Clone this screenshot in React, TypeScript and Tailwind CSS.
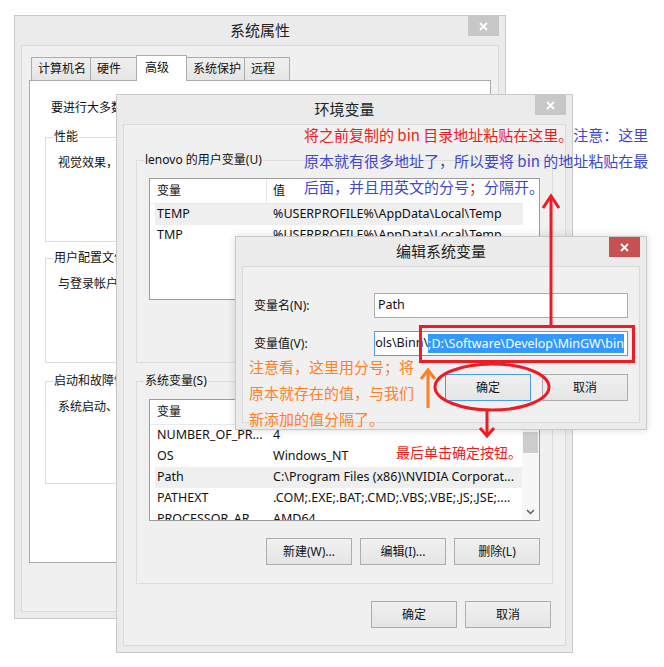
import React from 'react'

type Row = [string, string]

function CloseX({ active }: { active?: boolean }) {
  return (
    <div className={`absolute right-0 top-0 flex h-[20px] w-[31px] items-center justify-center ${active ? 'bg-[#c75050]' : 'bg-[#c7c7c7]'}`}>
      <svg width="9" height="9" viewBox="0 0 9 9">
        <path d="M1 1 L8 8 M8 1 L1 8" stroke="#fff" strokeWidth="1.8" />
      </svg>
    </div>
  )
}

function Win({ title, active, className, children }: { title: string; active?: boolean; className: string; children: React.ReactNode }) {
  return (
    <div className={`absolute flex flex-col border border-[#c9c9c9] bg-[#ebebeb] px-[6px] pb-[6px] ${className}`}>
      <div className="relative flex h-[29px] shrink-0 items-center justify-center text-[15px] text-[#222]">
        {title}
        <CloseX active={active} />
      </div>
      <div className="flex min-h-0 flex-1 flex-col border border-[#dadada] bg-[#f0f0f0]">{children}</div>
    </div>
  )
}

function Btn({ children, primary, className = '' }: { children: React.ReactNode; primary?: boolean; className?: string }) {
  return (
    <div
      className={`flex h-[27px] w-[86px] shrink-0 items-center justify-center border bg-linear-to-b from-[#f0f0f0] to-[#e5e5e5] text-[12px] text-[#111] ${
        primary ? 'border-[#4a9be8]' : 'border-[#acacac]'
      } ${className}`}
    >
      {children}
    </div>
  )
}

function Label({ children, bg }: { children: React.ReactNode; bg: string }) {
  return <div className={`-mt-[9px] ml-[7px] w-fit px-[1px] text-[12px] leading-[16px] text-[#111] ${bg}`}>{children}</div>
}

function ListView({ rows, hl, scroll }: { rows: Row[]; hl: number; scroll?: boolean }) {
  return (
    <div className="ml-[12px] flex h-[122px] w-[391px] overflow-hidden border border-[#9c9c9c] bg-white text-[12.5px] text-[#111]">
      <div className="min-w-0 flex-1 overflow-hidden">
        <div className="flex h-[25px] w-[373px] items-center border-b border-[#e5eaf1] text-[12px]">
          <div className="flex h-full w-[117px] items-center border-r border-[#e3e9f2] pl-[7px]">变量</div>
          <div className="pl-[6px]">值</div>
        </div>
        {rows.map((r, i) => (
          <div key={r[0]} className="w-[373px] pl-[5px]">
            <div className={`flex h-[21px] items-center whitespace-nowrap ${i === hl ? 'bg-[#efefef]' : ''}`}>
              <div className="w-[112px] shrink-0 overflow-hidden pl-[2px]">{r[0]}</div>
              <div className="min-w-0 flex-1 overflow-hidden pl-[6px]">{r[1]}</div>
            </div>
          </div>
        ))}
      </div>
      {scroll && (
        <div className="flex w-[17px] shrink-0 flex-col bg-[#f7f7f7]">
          <div className="h-[17px]" />
          <div className="mx-[1px] mt-[15px] h-[21px] bg-[#cdcdcd]" />
          <div className="mt-auto flex h-[17px] items-center justify-center">
            <svg width="9" height="6" viewBox="0 0 9 6">
              <path d="M1 1 L4.5 4.5 L8 1" stroke="#606060" strokeWidth="1.5" fill="none" />
            </svg>
          </div>
        </div>
      )}
    </div>
  )
}

const userRows: Row[] = [
  ['TEMP', '%USERPROFILE%\\AppData\\Local\\Temp'],
  ['TMP', '%USERPROFILE%\\AppData\\Local\\Temp'],
]

const sysRows: Row[] = [
  ['NUMBER_OF_PR...', '4'],
  ['OS', 'Windows_NT'],
  ['Path', 'C:\\Program Files (x86)\\NVIDIA Corporat...'],
  ['PATHEXT', '.COM;.EXE;.BAT;.CMD;.VBS;.VBE;.JS;.JSE;....'],
  ['PROCESSOR_AR...', 'AMD64'],
]

const tabs = [
  { t: '计算机名', w: 'w-[60px]' },
  { t: '硬件', w: 'w-[47px]' },
  { t: '高级', w: 'w-[51px]', sel: true },
  { t: '系统保护', w: 'w-[59px]' },
  { t: '远程', w: 'w-[46px]' },
]

const groups = [
  { t: '性能', d: '视觉效果，处理器计划，内存使用，以及虚拟内存', h: 'h-[105px]', mt: 'mt-[21px]' },
  { t: '用户配置文件', d: '与登录帐户相关的桌面设置', h: 'h-[105px]', mt: 'mt-[16px]' },
  { t: '启动和故障恢复', d: '系统启动、系统故障和调试信息', h: 'h-[103px]', mt: 'mt-[18px]' },
]

export default function App() {
  return (
    <div className="relative h-[667px] w-[664px] overflow-hidden bg-white font-['Noto_Sans','Noto_Sans_CJK_SC',sans-serif]">
      {/* 系统属性 */}
      <Win title="系统属性" className="left-[14px] top-[15px] h-[604px] w-[492px]">
        <div className="flex flex-1 flex-col px-[7px] pb-[48px] pt-[9px]">
          <div className="flex h-[25px] items-end pl-[2px]">
            {tabs.map((tab) =>
              tab.sel ? (
                <div key={tab.t} className={`relative z-10 -mb-px -ml-px flex h-[26px] items-center border border-b-0 border-[#acacac] bg-white pb-[2px] pl-[8px] text-[12px] text-[#111] ${tab.w}`}>
                  {tab.t}
                </div>
              ) : (
                <div key={tab.t} className={`-ml-px flex h-[23px] items-center border border-b-0 border-[#acacac] bg-linear-to-b from-[#f0f0f0] to-[#e5e5e5] pl-[6px] text-[12px] text-[#111] first:ml-0 ${tab.w}`}>
                  {tab.t}
                </div>
              )
            )}
          </div>
          <div className="flex flex-1 flex-col border border-[#acacac] bg-white px-[15px] pt-[19px]">
            <div className="pl-[6px] text-[12px] leading-[16px] text-[#111] whitespace-nowrap">要进行大多数更改，你必须作为管理员登录。</div>
            {groups.map((g) => (
              <div key={g.t} className={`border border-[#dcdcdc] ${g.h} ${g.mt}`}>
                <Label bg="bg-white">{g.t}</Label>
                <div className="mt-[10px] pl-[12px] text-[12px] leading-[16px] text-[#111] whitespace-nowrap">{g.d}</div>
              </div>
            ))}
          </div>
        </div>
      </Win>

      {/* 环境变量 */}
      <Win title="环境变量" className="left-[116px] top-[94px] h-[559px] w-[457px]">
        <div className="flex flex-col px-[12px] pt-[35px]">
          <div className="h-[203px] w-[417px] border border-[#dcdcdc]">
            <Label bg="bg-[#f0f0f0]">lenovo 的用户变量(U)</Label>
            <div className="mt-[10px]">
              <ListView rows={userRows} hl={0} />
            </div>
            <div className="mr-[12px] mt-[17px] flex justify-end gap-[8px]">
              <Btn>新建(N)...</Btn>
              <Btn>编辑(E)...</Btn>
              <Btn>删除(D)</Btn>
            </div>
          </div>
          <div className="mt-[18px] h-[203px] w-[417px] border border-[#dcdcdc]">
            <Label bg="bg-[#f0f0f0]">系统变量(S)</Label>
            <div className="mt-[10px]">
              <ListView rows={sysRows} hl={2} scroll />
            </div>
            <div className="mr-[12px] mt-[17px] flex justify-end gap-[8px]">
              <Btn>新建(W)...</Btn>
              <Btn>编辑(I)...</Btn>
              <Btn>删除(L)</Btn>
            </div>
          </div>
          <div className="mr-[2px] mt-[17px] flex justify-end gap-[8px]">
            <Btn>确定</Btn>
            <Btn>取消</Btn>
          </div>
        </div>
      </Win>

      {/* 编辑系统变量 */}
      <Win title="编辑系统变量" active className="left-[235px] top-[236px] h-[194px] w-[412px] shadow-[0_0_8px_rgba(0,0,0,0.15)]">
        <div className="flex flex-col px-[11px] pt-[26px] text-[12px] text-[#111]">
          <div className="flex items-center">
            <div className="w-[120px]">变量名(N):</div>
            <div className="flex h-[25px] w-[254px] items-center border border-[#abadb3] bg-white pl-[3px] text-[12.5px]">Path</div>
          </div>
          <div className="mt-[13px] flex items-center">
            <div className="w-[120px]">变量值(V):</div>
            <div className="flex h-[25px] w-[254px] items-center justify-end overflow-hidden whitespace-nowrap border border-[#569de5] bg-white pr-[3px] text-[12.5px]">
              <span className="shrink-0">C:\Program Files\Microsoft SQL Server\110\Tools\Binn\</span>
              <span className="shrink-0 bg-[#3399ff] leading-[19px] text-white">;D:\Software\Develop\MinGW\bin</span>
            </div>
          </div>
          <div className="mt-[18px] flex justify-end gap-[11px]">
            <Btn primary>确定</Btn>
            <Btn>取消</Btn>
          </div>
        </div>
      </Win>

      {/* 标注 */}
      <svg className="pointer-events-none absolute left-0 top-0" width="664" height="667" viewBox="0 0 664 667">
        <rect x="420.5" y="326.5" width="213" height="35" fill="none" stroke="#ed1c24" strokeWidth="3" />
        <path d="M551 326 L551 197" stroke="#ed1c24" strokeWidth="3" />
        <path d="M543 208 L551 196 L559 208" stroke="#ed1c24" strokeWidth="3" fill="none" />
        <ellipse cx="492" cy="387" rx="57" ry="23" fill="none" stroke="#ed1c24" strokeWidth="3" />
        <path d="M487 410 L487 436" stroke="#ed1c24" strokeWidth="3" />
        <path d="M480 428 L487 436 L494 428" stroke="#ed1c24" strokeWidth="3" fill="none" />
        <path d="M428 408 L428 371" stroke="#ff7f27" strokeWidth="3" />
        <path d="M421 379 L428 370 L435 379" stroke="#ff7f27" strokeWidth="3" fill="none" />
      </svg>

      <div className="absolute left-[304px] top-[122px] whitespace-nowrap font-['Noto_Sans_CJK_SC',sans-serif] text-[15px] leading-[26px] text-[#3f48cc]">
        <div>
          <span className="text-[#ed1c24]">将之前复制的 bin 目录地址粘贴在这里。</span>注意：这里
        </div>
        <div>原本就有很多地址了，所以要将 bin 的地址粘贴在最</div>
        <div>
          后面，并且用英文的分号<span className="text-[#ed1c24]">；</span>分隔开。
        </div>
      </div>

      <div className="absolute left-[249px] top-[354px] whitespace-nowrap font-['Noto_Sans_CJK_SC',sans-serif] text-[15px] leading-[26px] text-[#ff7f27]">
        <div>注意看，这里用分号；将</div>
        <div>原本就存在的值，与我们</div>
        <div>新添加的值分隔了。</div>
      </div>

      <div className="absolute left-[396px] top-[442px] whitespace-nowrap font-['Noto_Sans_CJK_SC',sans-serif] text-[14px] leading-[20px] text-[#ed1c24]">
        最后单击确定按钮。
      </div>
    </div>
  )
}
